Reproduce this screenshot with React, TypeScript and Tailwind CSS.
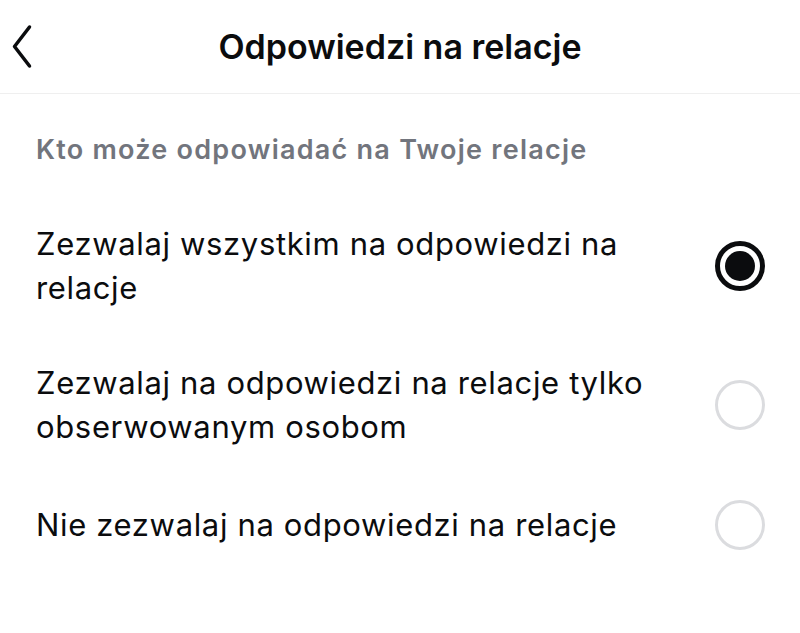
const options = [
  { label: "Zezwalaj wszystkim na odpowiedzi na relacje", selected: true },
  { label: "Zezwalaj na odpowiedzi na relacje tylko obserwowanym osobom", selected: false },
  { label: "Nie zezwalaj na odpowiedzi na relacje", selected: false },
];

function Radio({ selected }: { selected: boolean }) {
  if (selected) {
    return (
      <div className="flex h-[50px] w-[50px] shrink-0 items-center justify-center rounded-full border-[5px] border-[#0b0c0e]">
        <div className="h-[30px] w-[30px] rounded-full bg-[#0b0c0e]" />
      </div>
    );
  }
  return <div className="h-[50px] w-[50px] shrink-0 rounded-full border-[3px] border-[#dbdcdf]" />;
}

export default function App() {
  return (
    <div className="h-[633px] w-[800px] bg-white font-['Inter',sans-serif] text-[#0b0c0e]">
      {/* Header */}
      <div className="relative flex h-[94px] items-center justify-center border-b border-[#efefef]">
        <svg
          width="24"
          height="46"
          viewBox="0 0 24 46"
          className="absolute left-[10px] top-[24px]"
          fill="none"
          stroke="#0b0c0e"
          strokeWidth="3.5"
          strokeLinecap="round"
          strokeLinejoin="round"
        >
          <polyline points="19.5,3 4.5,22.5 19.5,42" />
        </svg>
        <h1 className="text-[34px] font-semibold">Odpowiedzi na relacje</h1>
      </div>

      <div className="mt-[39px] px-[36px] text-[27px] leading-[34px] font-semibold tracking-[1.25px] text-[#72757d]">
        Kto może odpowiadać na Twoje relacje
      </div>

      <div className="mt-[55px] flex flex-col gap-[51px]">
        {options.map((o) => (
          <div key={o.label} className="flex items-center gap-[28px] pl-[36px] pr-[35px]">
            <div className="flex-1 text-[31px] leading-[44px] tracking-[0.65px]">{o.label}</div>
            <Radio selected={o.selected} />
          </div>
        ))}
      </div>
    </div>
  );
}
